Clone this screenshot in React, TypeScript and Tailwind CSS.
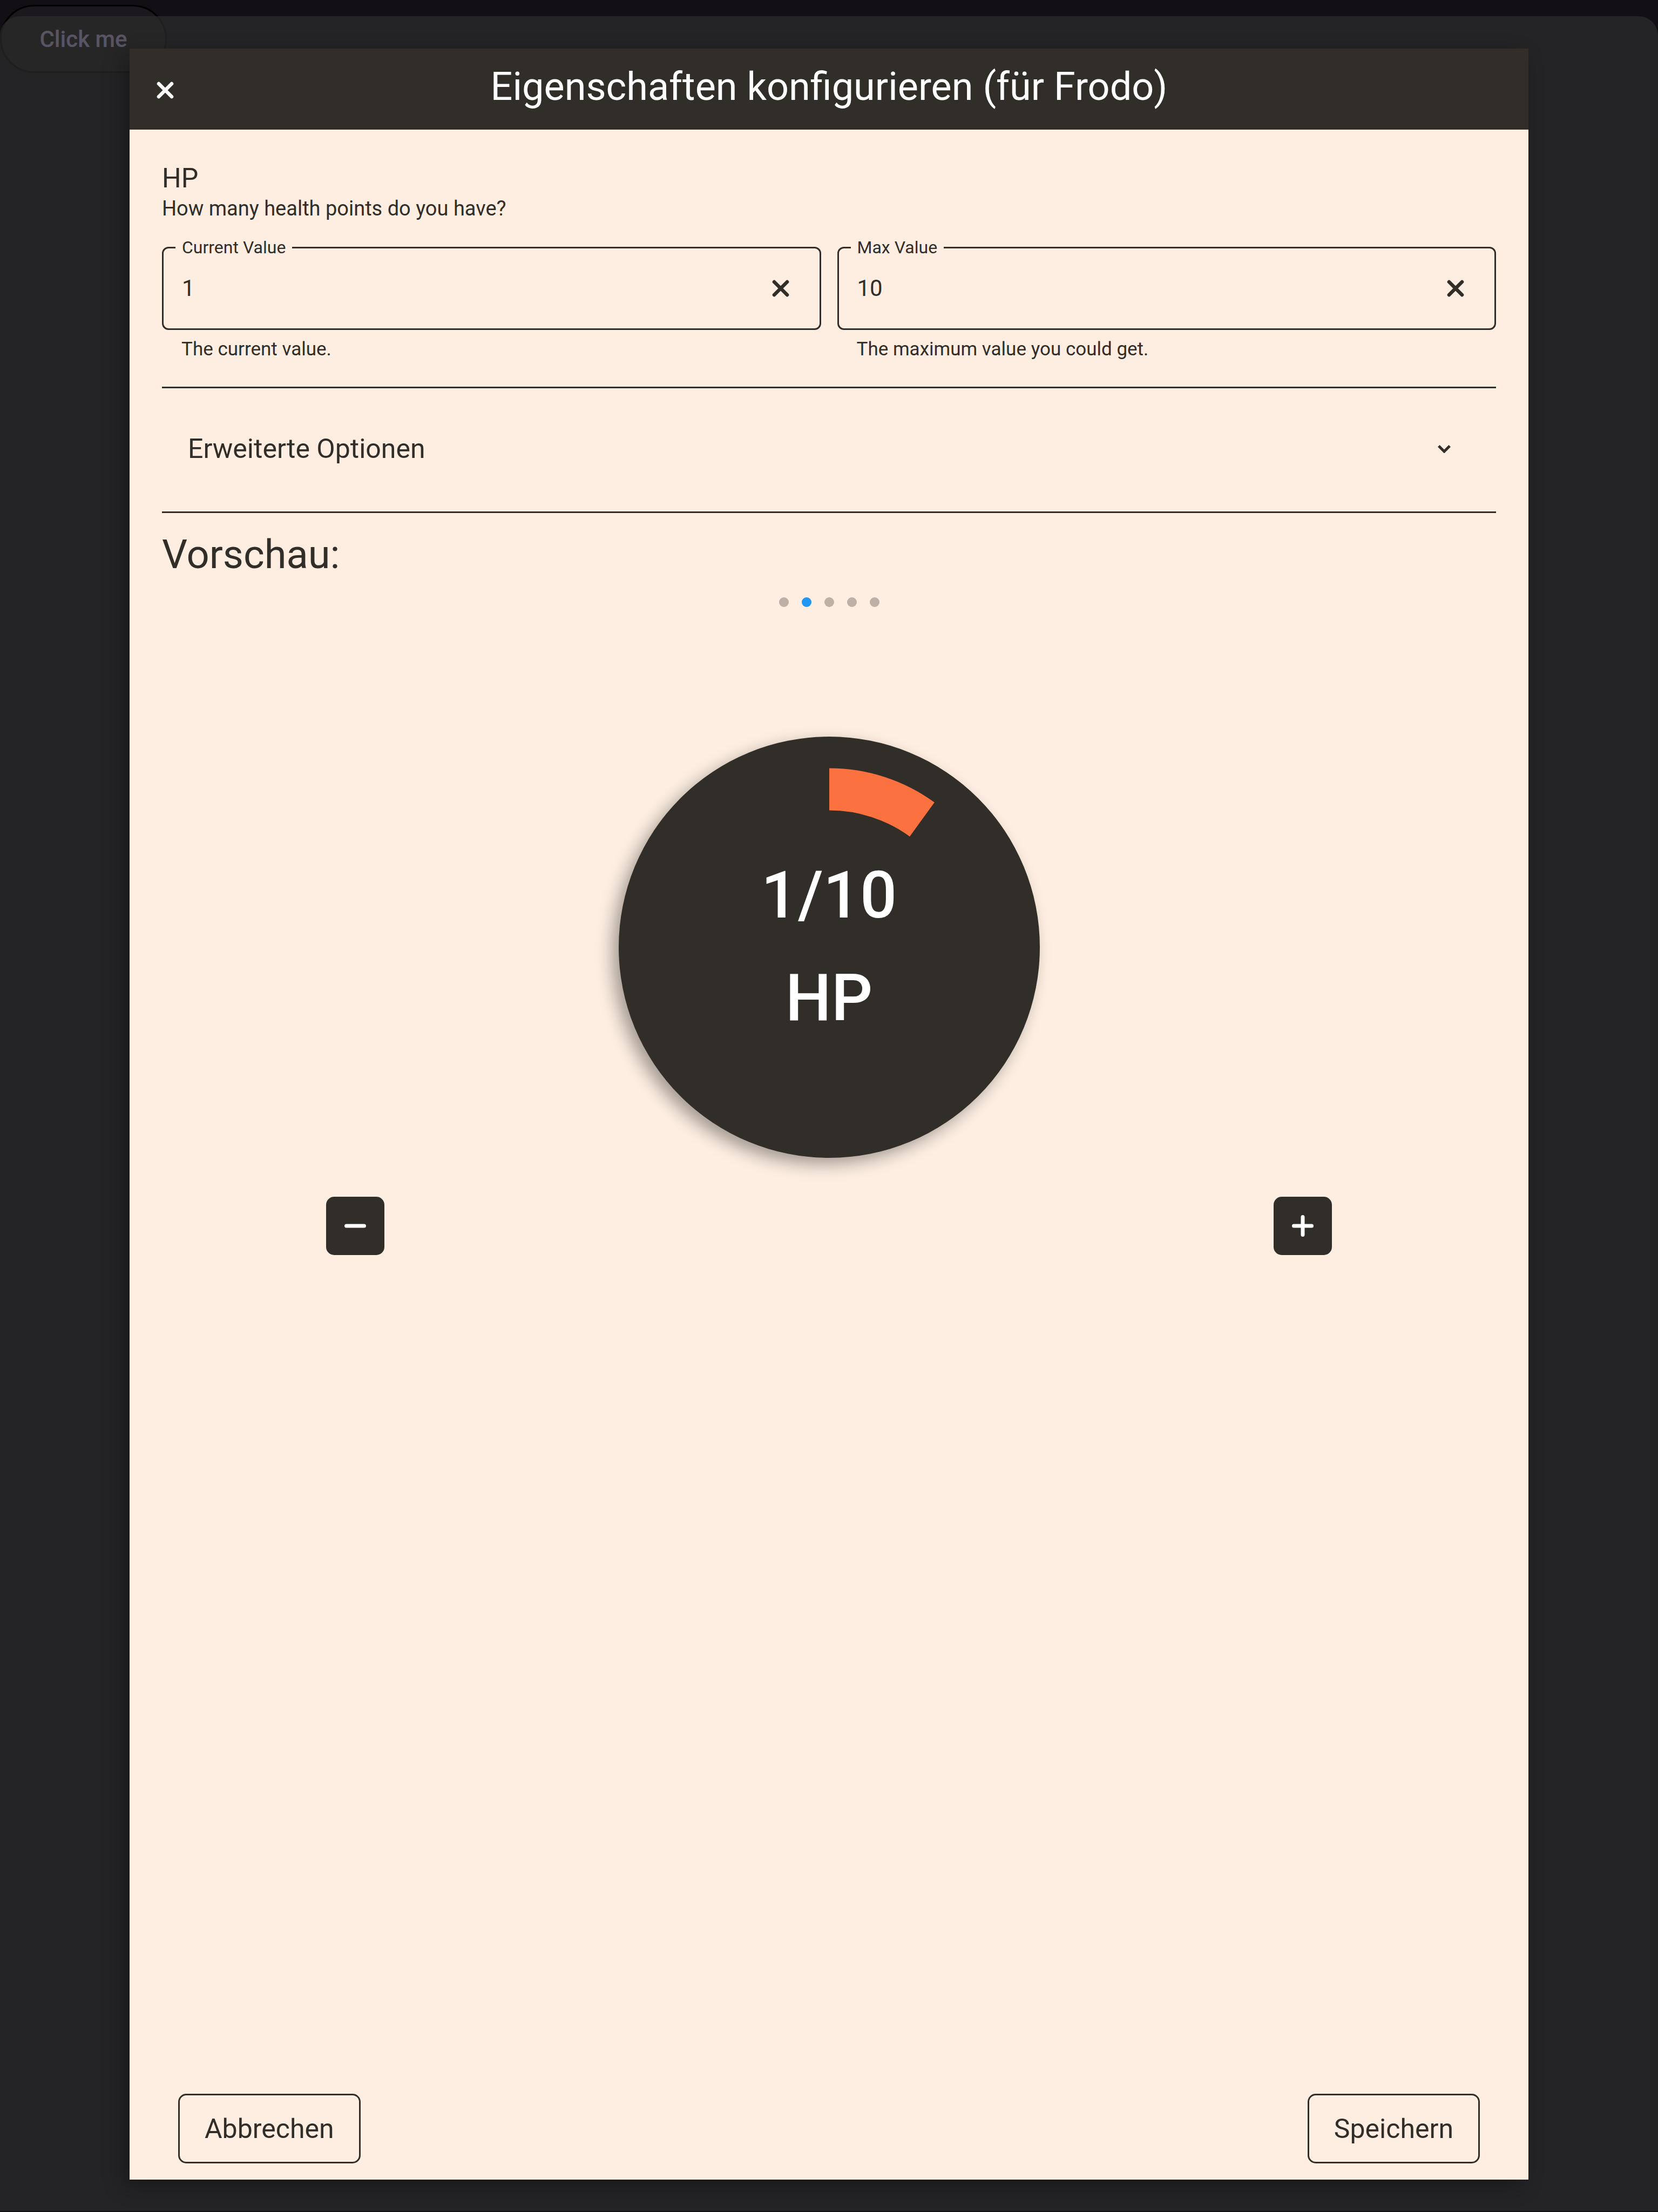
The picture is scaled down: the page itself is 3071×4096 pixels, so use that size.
import { useState } from "react";

function CrossIcon() {
  return (
    <svg viewBox="0 0 32 32" className="size-8" fill="none" stroke="currentColor" strokeWidth="6.6" strokeLinecap="round" aria-hidden="true">
      <path d="M4 4 28 28M28 4 4 28" />
    </svg>
  );
}

type FieldProps = {
  id: string;
  label: string;
  helper: string;
  value: string;
  onChange: (value: string) => void;
};

function Field({ id, label, helper, value, onChange }: FieldProps) {
  return (
    <div className="min-w-0 flex-1">
      <fieldset className="min-w-0 rounded-[12px] border-[3px] border-[#312d28] pl-[22px] pr-9">
        <legend className="px-3 text-[32px] leading-9">
          <label htmlFor={id}>{label}</label>
        </legend>
        <div className="flex h-[132px] items-center px-3 pb-4">
          <input
            id={id}
            value={value}
            onChange={(e) => onChange(e.target.value)}
            className="min-w-0 flex-1 bg-transparent text-[42px] leading-[60px] outline-none"
          />
          <button type="button" aria-label={`${label} löschen`} onClick={() => onChange("")} className="flex size-12 items-center justify-center">
            <CrossIcon />
          </button>
        </div>
      </fieldset>
      <p className="mt-3 pl-9 text-[35px] leading-12">{helper}</p>
    </div>
  );
}

function Gauge({ current, max, name }: { current: number; max: number; name: string }) {
  const share = max > 0 ? Math.min(Math.max(current / max, 0), 0.9999) : 0;
  const angle = share * 2 * Math.PI;
  const large = share > 0.5 ? 1 : 0;
  const r = 292.5;
  const x = 390 + r * Math.sin(angle);
  const y = 390 - r * Math.cos(angle);
  return (
    <div className="relative flex size-[780px] flex-col items-center justify-center rounded-full bg-[#312d28] pb-[2px] text-[120px] leading-[190px] font-medium text-white shadow-[-12px_12px_30px_rgba(0,0,0,0.35)]">
      <svg viewBox="0 0 780 780" className="absolute inset-0 size-full" aria-hidden="true">
        <path d={`M390 97.5A${r} ${r} 0 ${large} 1 ${x} ${y}`} fill="none" stroke="#fb7140" strokeWidth="78" />
      </svg>
      <span className="relative">{current}/{max}</span>
      <span className="relative">{name}</span>
    </div>
  );
}

const stepButton = "flex size-[108px] items-center justify-center rounded-[15px] bg-[#312d28] text-white";
const actionButton = "h-[129px] rounded-[15px] border-[3px] border-[#312d28] px-[46px] text-[50px] leading-[60px]";

export default function App() {
  const [current, setCurrent] = useState("1");
  const [max, setMax] = useState("10");
  const [page, setPage] = useState(1);
  const step = (by: number) => setCurrent(String(Number(current) + by));

  return (
    <div className="relative flex min-h-screen bg-[#121014] px-[240px] pt-[90px] pb-[60px] font-['Roboto',sans-serif] text-[#312d28]">
      <button type="button" className="absolute top-[9px] left-0 h-[126px] w-[309px] rounded-full border-[3px] border-black bg-[#1b191d] text-[42px] font-medium text-[#beb1e4]">
        Click me
      </button>
      <div className="absolute inset-x-0 top-[30px] bottom-[2px] rounded-t-[36px] bg-[#2c2c2c]/70" />

      <section role="dialog" aria-labelledby="dialog-title" className="relative flex min-w-0 flex-1 flex-col bg-[#fdeee1] shadow-[-12px_12px_36px_rgba(0,0,0,0.3)]">
        <header className="grid h-[150px] grid-cols-[132px_1fr_132px] items-center bg-[#312d28] text-white">
          <button type="button" aria-label="Schließen" className="flex size-[132px] items-center justify-center pt-1">
            <CrossIcon />
          </button>
          <h1 id="dialog-title" className="pb-2 text-center text-[72px] leading-[90px]">
            Eigenschaften konfigurieren (für Frodo)
          </h1>
        </header>

        <div className="flex flex-1 flex-col px-[60px] pt-[60px]">
          <h2 className="text-[50px] leading-[60px]">HP</h2>
          <p className="text-[38px] leading-[52px]">How many health points do you have?</p>

          <div className="mt-7 flex gap-[30px]">
            <Field id="current" label="Current Value" helper="The current value." value={current} onChange={setCurrent} />
            <Field id="max" label="Max Value" helper="The maximum value you could get." value={max} onChange={setMax} />
          </div>

          <button type="button" aria-expanded="false" className="mt-[45px] flex h-[234px] items-center justify-between border-y-[3px] border-[#312d28] pr-[84px] pb-1 pl-12 text-[50px] leading-[60px]">
            Erweiterte Optionen
            <svg viewBox="0 0 24 15" className="h-[15px] w-6" fill="none" stroke="currentColor" strokeWidth="5" aria-hidden="true">
              <path d="M1.8 1.8 12 12 22.2 1.8" />
            </svg>
          </button>

          <h2 className="mt-8 text-[74px] leading-[90px]">Vorschau:</h2>

          <div className="mt-[34px] flex justify-center gap-6">
            {[0, 1, 2, 3, 4].map((i) => (
              <button
                key={i}
                type="button"
                aria-label={`Seite ${i + 1}`}
                onClick={() => setPage(i)}
                className={i === page ? "size-[18px] rounded-full bg-[#2196f3]" : "size-[18px] rounded-full bg-[#bdb0a5]"}
              />
            ))}
          </div>

          <div className="mt-60 flex justify-center">
            <Gauge current={Number(current)} max={Number(max)} name="HP" />
          </div>

          <div className="mt-[72px] flex justify-between px-[304px]">
            <button type="button" aria-label="Verringern" onClick={() => step(-1)} className={stepButton}>
              <svg viewBox="0 0 40 40" className="size-10" stroke="currentColor" strokeWidth="7" strokeLinecap="round" aria-hidden="true">
                <path d="M3.5 20H36.5" />
              </svg>
            </button>
            <button type="button" aria-label="Erhöhen" onClick={() => step(1)} className={stepButton}>
              <svg viewBox="0 0 40 40" className="size-10" stroke="currentColor" strokeWidth="7" strokeLinecap="round" aria-hidden="true">
                <path d="M3.5 20H36.5M20 3.5V36.5" />
              </svg>
            </button>
          </div>

          <footer className="mt-auto flex justify-between px-[30px] pb-[30px]">
            <button type="button" className={actionButton}>Abbrechen</button>
            <button type="button" className={actionButton}>Speichern</button>
          </footer>
        </div>
      </section>
    </div>
  );
}
